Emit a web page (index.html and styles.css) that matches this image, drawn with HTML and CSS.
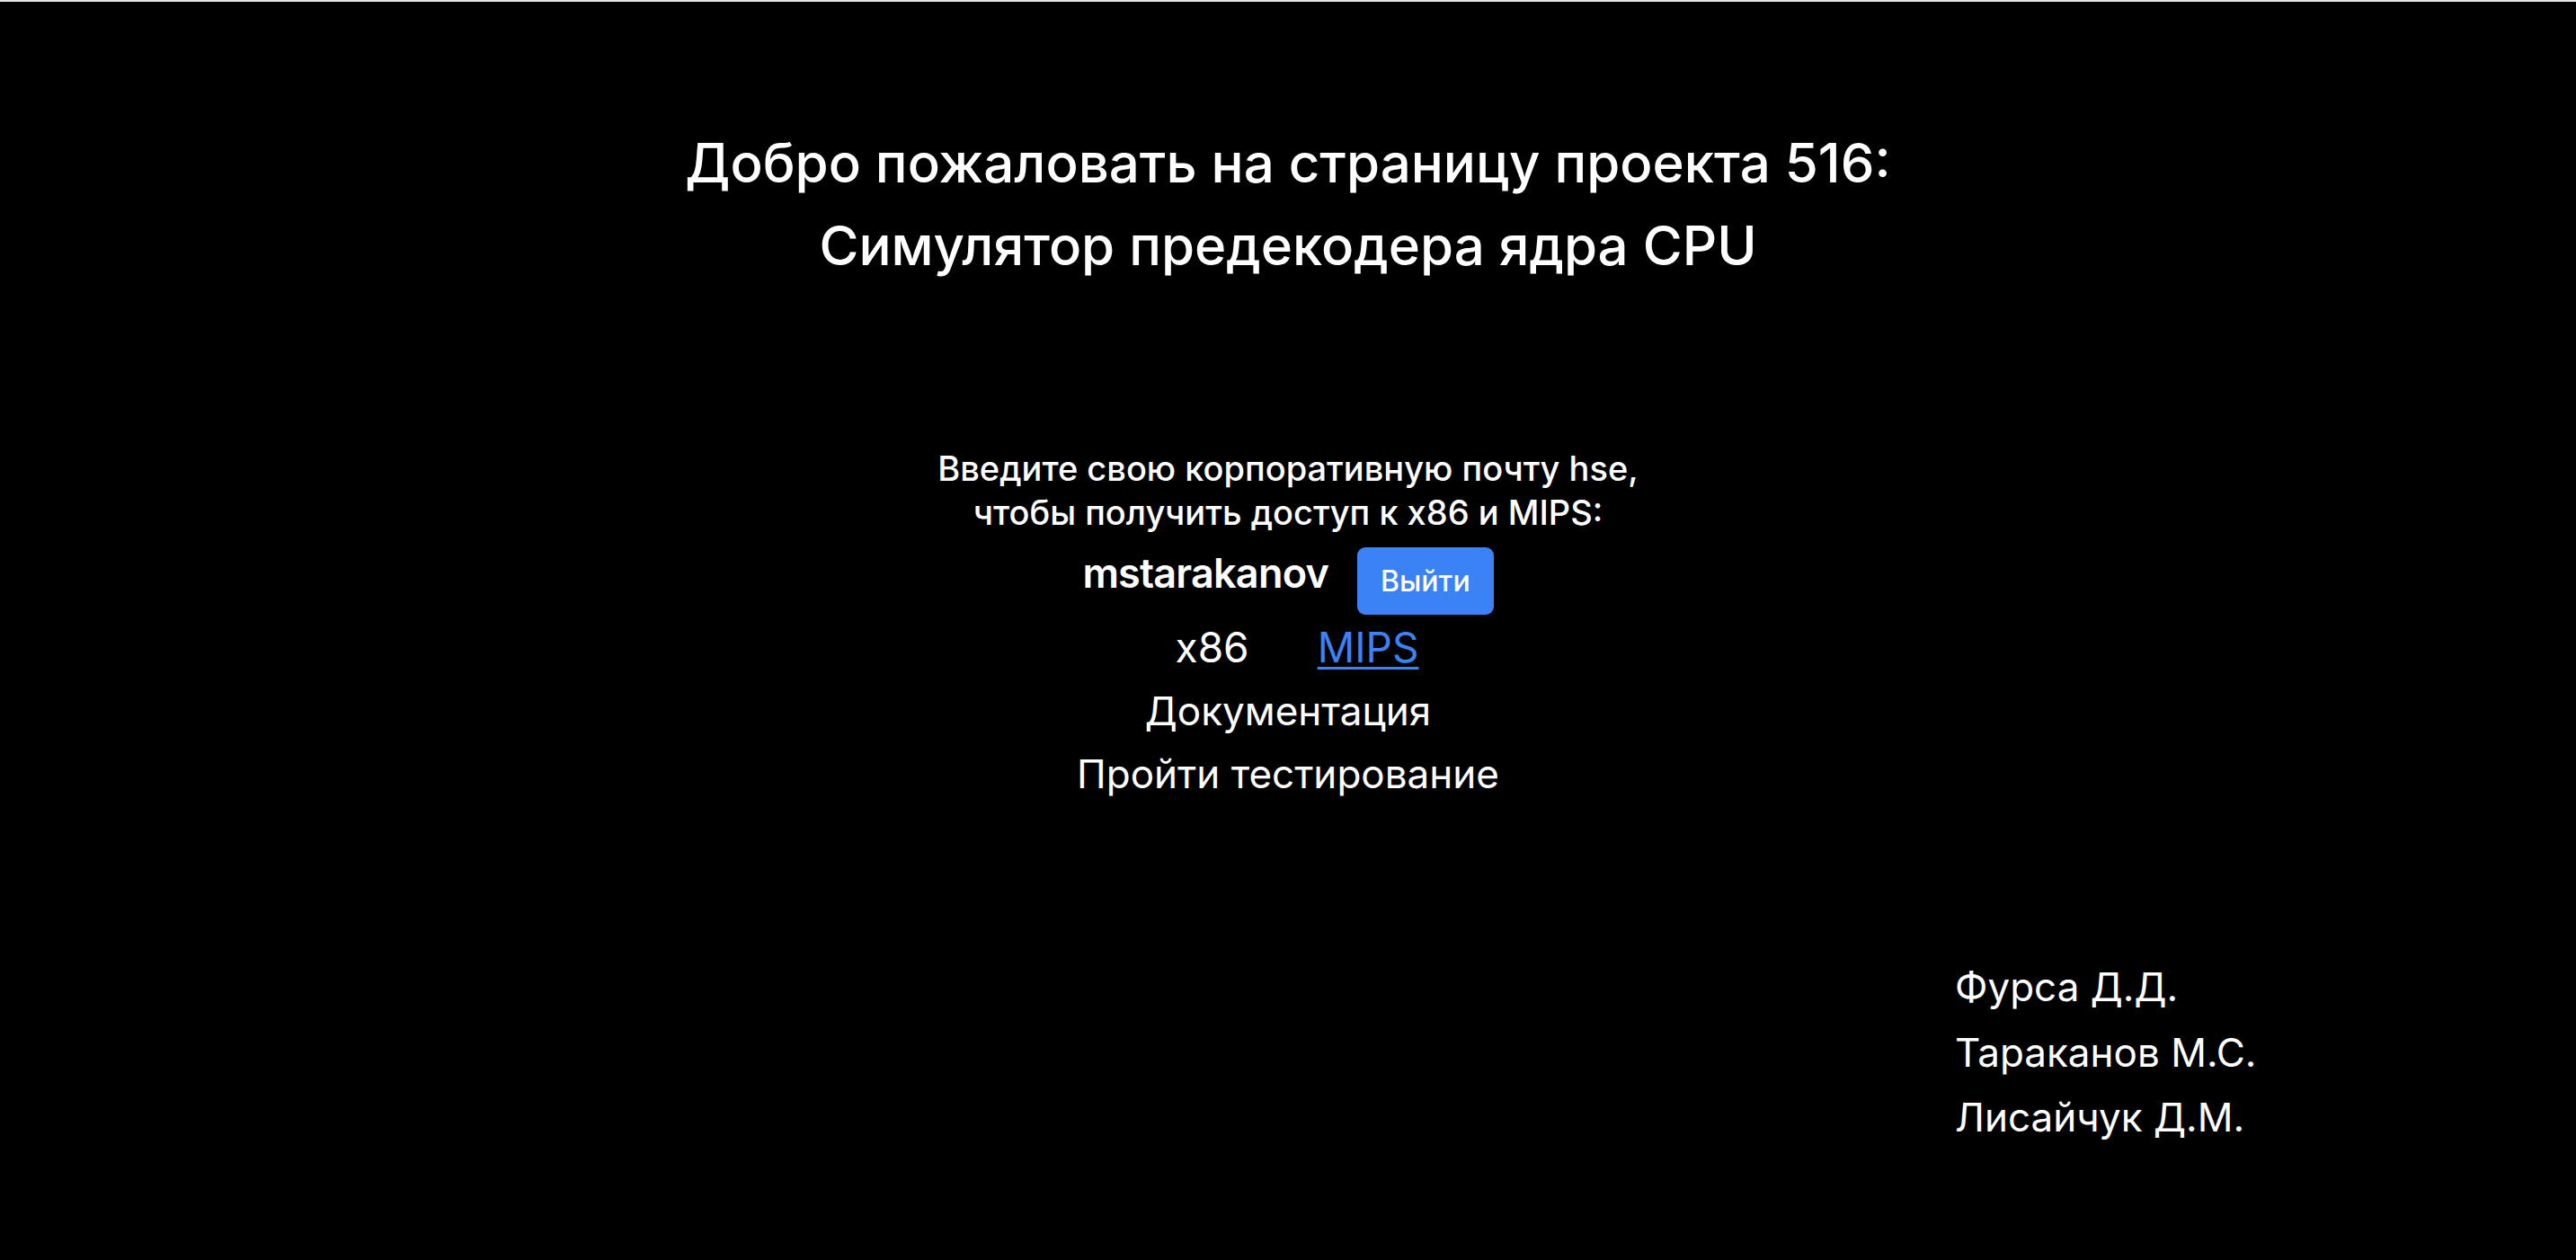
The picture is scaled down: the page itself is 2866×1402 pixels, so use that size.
FILE: index.html
```html
<!DOCTYPE html>
<html lang="ru">
<head>
<meta charset="utf-8">
<title>Проект 516</title>
<link rel="stylesheet" href="styles.css">
</head>
<body>
<div class="topbar"></div>
<main class="page">
  <h1 class="title">Добро пожаловать на страницу проекта 516:<br>Симулятор предекодера ядра CPU</h1>
  <p class="prompt">Введите свою корпоративную почту hse,<br>чтобы получить доступ к x86 и MIPS:</p>
  <div class="login">
    <span class="user">mstarakanov</span>
    <button class="logout" type="button">Выйти</button>
  </div>
  <div class="archs">
    <span class="arch">x86</span>
    <a class="arch link" href="#">MIPS</a>
  </div>
  <a class="nav" href="#">Документация</a>
  <a class="nav" href="#">Пройти тестирование</a>
  <footer class="authors">
    <div class="author">Фурса Д.Д.</div>
    <div class="author">Тараканов М.С.</div>
    <div class="author">Лисайчук Д.М.</div>
  </footer>
</main>
</body>
</html>
```
FILE: styles.css
```css
html, body {
  margin: 0;
  padding: 0;
  background: #000;
  color: #fff;
  font-family: Inter, "Noto Sans", "Liberation Sans", sans-serif;
}
.topbar {
  height: 2px;
  background: #e6e6e6;
}
.page {
  display: flex;
  flex-direction: column;
  align-items: center;
  height: 1400px;
}
.title {
  margin: 133px 0 0;
  font-size: 60px;
  line-height: 92px;
  font-weight: 500;
  text-align: center;
}
.prompt {
  margin: 178px 0 0;
  font-size: 38px;
  line-height: 49px;
  font-weight: 500;
  text-align: center;
}
.login {
  margin-top: 14px;
  display: flex;
  align-items: flex-start;
  gap: 32px;
}
.user {
  font-size: 45px;
  line-height: 58px;
  font-weight: 600;
  letter-spacing: -0.8px;
}
.logout {
  height: 75px;
  padding: 0 26px;
  border: 0;
  border-radius: 9px;
  background: #3b82f6;
  color: #fff;
  font-family: inherit;
  font-size: 32px;
  line-height: 75px;
  font-weight: 500;
}
.archs {
  margin-top: 7px;
  display: flex;
  gap: 76px;
  padding-left: 20px;
}
.arch {
  font-size: 46px;
  line-height: 58px;
  color: #fff;
  text-decoration: none;
}
.link {
  color: #3b82f6;
  text-decoration: underline;
  text-decoration-thickness: 3px;
  text-underline-offset: 5px;
}
.nav {
  font-size: 44px;
  line-height: 70px;
  color: #fff;
  text-decoration: none;
}
.archs + .nav {
  margin-top: 7px;
}
.authors {
  align-self: stretch;
  margin-top: 166px;
  padding-left: 2175px;
}
.author {
  font-size: 44px;
  line-height: 72.5px;
}
```
